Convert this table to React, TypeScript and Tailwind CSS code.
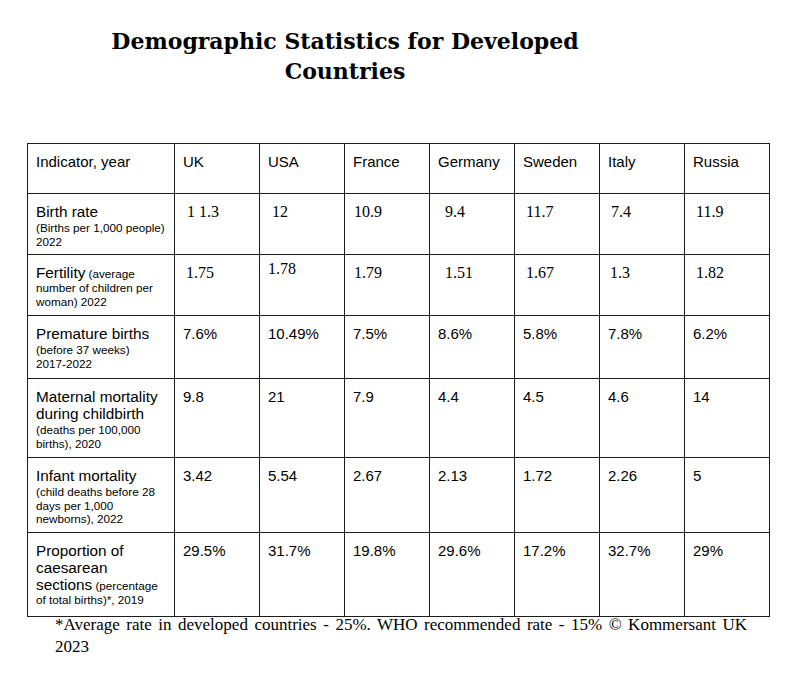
import React from 'react';

type Row = {
  main: string;
  small: React.ReactNode;
  inline?: boolean;
  values: string[];
  serif?: boolean;
  shifts?: string[];
  height: string;
};

const countries = ['UK', 'USA', 'France', 'Germany', 'Sweden', 'Italy', 'Russia'];

const rows: Row[] = [
  {
    main: 'Birth rate',
    small: '(Births per 1,000 people) 2022',
    values: ['1 1.3', '12', '10.9', '9.4', '11.7', '7.4', '11.9'],
    serif: true,
    shifts: ['pl-[4px]', 'pl-[4px]', 'pl-[1px]', 'pl-[7px]', 'pl-[3px]', 'pl-[3px]', 'pl-[3px]'],
    height: 'h-[61px]',
  },
  {
    main: 'Fertility',
    small: '(average number of children per woman) 2022',
    inline: true,
    values: ['1.75', '1.78', '1.79', '1.51', '1.67', '1.3', '1.82'],
    serif: true,
    shifts: ['pl-[3px]', 'pl-0 -mt-[4px]', 'pl-[1px]', 'pl-[7px]', 'pl-[3px]', 'pl-[2px]', 'pl-[3px]'],
    height: 'h-[61px]',
  },
  {
    main: 'Premature births',
    small: (
      <>
        (before 37 weeks) <span className="whitespace-nowrap">2017-2022</span>
      </>
    ),
    values: ['7.6%', '10.49%', '7.5%', '8.6%', '5.8%', '7.8%', '6.2%'],
    height: 'h-[63px]',
  },
  {
    main: 'Maternal mortality during childbirth',
    small: '(deaths per 100,000 births), 2020',
    values: ['9.8', '21', '7.9', '4.4', '4.5', '4.6', '14'],
    height: 'h-[79px]',
  },
  {
    main: 'Infant mortality',
    small: '(child deaths before 28 days per 1,000 newborns), 2022',
    values: ['3.42', '5.54', '2.67', '2.13', '1.72', '2.26', '5'],
    height: 'h-[75px]',
  },
  {
    main: 'Proportion of caesarean sections',
    small: '(percentage of total births)*, 2019',
    inline: true,
    values: ['29.5%', '31.7%', '19.8%', '29.6%', '17.2%', '32.7%', '29%'],
    height: 'h-[84px]',
  },
];

const cell = 'border border-[#1c1c1c] align-top pl-[8px] pr-[9px] pt-[9px]';

function Label({ row }: { row: Row }) {
  if (row.inline) {
    return (
      <p className="text-[11.7px] leading-[13.5px]">
        <span className="text-[15.3px] leading-[17px]">{row.main}</span> {row.small}
      </p>
    );
  }
  return (
    <div>
      <p className="text-[15.3px] leading-[17px]">{row.main}</p>
      <p className="text-[11.7px] leading-[13.5px] mt-[1px]">{row.small}</p>
    </div>
  );
}

export default function App() {
  return (
    <div className="w-[800px] h-[676px] bg-white text-black font-['Liberation_Sans',Arial,sans-serif]">
      <h1 className="ml-[90px] w-[510px] pt-[26px] text-center font-['DejaVu_Serif',serif] font-bold text-[22px] leading-[30px]">
        Demographic Statistics for Developed Countries
      </h1>

      <table className="ml-[27px] mt-[57px] border-collapse table-fixed w-[743px]">
        <colgroup>
          <col className="w-[147px]" />
          {countries.map((c) => (
            <col key={c} className="w-[85px]" />
          ))}
        </colgroup>
        <thead>
          <tr className="h-[50px]">
            <th className={`${cell} text-left font-normal text-[15px] leading-[17px]`}>Indicator, year</th>
            {countries.map((c) => (
              <th key={c} className={`${cell} text-left font-normal text-[15px] leading-[17px]`}>
                {c}
              </th>
            ))}
          </tr>
        </thead>
        <tbody>
          {rows.map((row) => (
            <tr key={row.main} className={row.height}>
              <td className={cell}>
                <Label row={row} />
              </td>
              {row.values.map((v, i) => (
                <td key={i} className={cell}>
                  {row.serif ? (
                    <p className={`font-['Liberation_Serif',serif] text-[16px] leading-[17px] ${row.shifts?.[i] ?? ''}`}>
                      {v}
                    </p>
                  ) : (
                    <p className="text-[15px] leading-[17px]">{v}</p>
                  )}
                </td>
              ))}
            </tr>
          ))}
        </tbody>
      </table>

      <p className="ml-[55px] -mt-[3px] w-[692px] text-justify font-['Liberation_Serif',serif] text-[17px] leading-[22px]">
        *Average rate in developed countries - 25%. WHO recommended rate - 15% © Kommersant UK 2023
      </p>
    </div>
  );
}
